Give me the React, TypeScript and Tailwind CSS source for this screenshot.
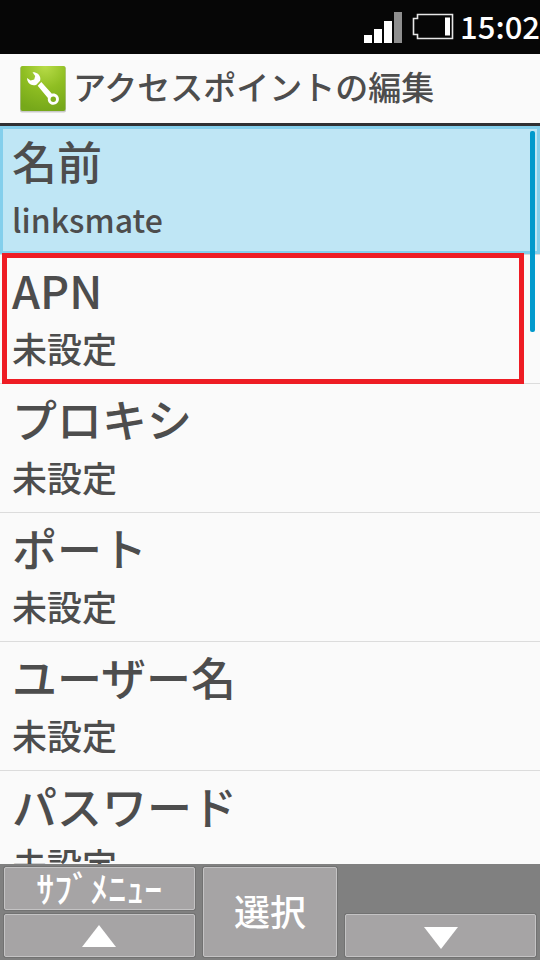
import React from 'react';
import clsx from 'clsx';

interface ApnField {
    label: string;
    value: string;
    selected?: boolean;
    highlighted?: boolean;
}

const fields: ApnField[] = [
    { label: '名前', value: 'linksmate', selected: true },
    { label: 'APN', value: '未設定', highlighted: true },
    { label: 'プロキシ', value: '未設定' },
    { label: 'ポート', value: '未設定' },
    { label: 'ユーザー名', value: '未設定' },
    { label: 'パスワード', value: '未設定' },
];

const SignalIcon = () => (
    <svg width="38" height="31" viewBox="0 0 38 31" aria-hidden="true">
        <path d="M0 23h8v8H0zM10 17h8v14h-8zM20 9h8v22h-8z" fill="#fff" />
        <path d="M30 0h8v31h-8z" fill="#8e8e8e" />
    </svg>
);

const BatteryIcon = () => (
    <svg width="42" height="28" viewBox="0 0 42 28" aria-hidden="true">
        <path d="M5.500 1.500h35v24h-35v-4h-4v-16h4z" fill="none" stroke="#e6e6e6" strokeWidth="1.600" />
        <path d="M33 4.500h5v18h-5z" fill="#fff" />
    </svg>
);

const SettingsIcon = () => (
    <svg width="48" height="48" viewBox="0 0 48 48" aria-hidden="true">
        <defs>
            <radialGradient id="tile" cx="0.55" cy="0" r="1">
                <stop offset="0" stopColor="#b8dc48" />
                <stop offset="0.5" stopColor="#8fbe22" />
                <stop offset="1" stopColor="#76a81a" />
            </radialGradient>
        </defs>
        <rect x="1" y="1.500" width="46" height="46" rx="2" fill="#c9c9c9" />
        <rect x="1.500" y="1" width="45" height="45" rx="2" fill="url(#tile)" />
        <path
            d="M13.500 7.300c4-.3 7.300 2.200 7.800 5.600.1 1 0 1.900-.2 2.800l-3.700 4c-4.200 1.700-8.600-.6-9.300-5.600l-.1-1 3.600 2.400 3.600-1 1-3.600z"
            fill="#fff"
        />
        <path
            d="M22.300 17l10.600 11.800c3.600-.9 7 1.700 7 5.300 0 3.100-2.500 5.600-5.600 5.600-3.500 0-6.100-3.200-5.400-6.800L18.700 20.800z"
            fill="#fff"
        />
        <circle cx="34.300" cy="34.200" r="2.700" fill="#7fb01d" />
    </svg>
);

const StatusBar = () => (
    <div className="flex h-[54px] shrink-0 items-center justify-end bg-[#060606] text-white">
        <SignalIcon />
        <span className="ml-2.5 mr-1.5">
            <BatteryIcon />
        </span>
        <time className="pb-1 text-[31px] font-medium leading-none">15:02</time>
    </div>
);

const FieldRow = ({ field }: { field: ApnField }) => (
    <li className="relative border-b border-[#dcdcdc]">
        <button
            type="button"
            className={clsx(
                'block w-full px-3 pb-[7px] pt-[5px] text-left',
                field.selected && 'bg-[#bfe6f5] shadow-[inset_0_0_0_3px_#84cfec]'
            )}
        >
            <span className="block text-[45px] leading-[60px]">{field.label}</span>
            <span className={clsx('block leading-[56px]', field.selected ? 'text-[32px]' : 'text-[35px]')}>
                {field.value}
            </span>
        </button>
        {field.highlighted && (
            <div className="pointer-events-none absolute -bottom-px -top-0.5 left-0.5 right-4 z-10 border-[5px] border-[#ee1c24]" />
        )}
    </li>
);

const keyClass =
    'flex items-center justify-center rounded-xs border border-[#c4c3c4] bg-[#a6a4a5] shadow-[0_0_0_1px_#727272]';

const SoftKeys = () => (
    <nav className="grid shrink-0 grid-cols-[192fr_136fr_192fr] grid-rows-[43px_43px] gap-x-2 gap-y-1 bg-[#808080] px-1 py-[3px] text-white">
        <button type="button" className={keyClass}>
            <span className="pb-1 text-[36px] leading-none">ｻﾌﾞﾒﾆｭｰ</span>
        </button>
        <button type="button" className={clsx(keyClass, 'row-span-2')}>
            <span className="pb-1 text-[36px] leading-none">選択</span>
        </button>
        <button type="button" aria-label="上へ" className={clsx(keyClass, 'col-start-1 row-start-2')}>
            <svg width="34" height="22" viewBox="0 0 34 22" aria-hidden="true">
                <path d="M17 0l17 22H0z" fill="#fff" />
            </svg>
        </button>
        <button type="button" aria-label="下へ" className={clsx(keyClass, 'col-start-3 row-start-2 pt-1')}>
            <svg width="34" height="22" viewBox="0 0 34 22" aria-hidden="true">
                <path d="M0 0h34L17 22z" fill="#fff" />
            </svg>
        </button>
    </nav>
);

export default function App() {
    return (
        <div className="flex h-screen flex-col overflow-hidden bg-[#fafafa] font-['Noto_Sans_CJK_JP',sans-serif] font-medium text-[#4d4d4d]">
            <StatusBar />
            <header className="flex h-[72px] shrink-0 items-center gap-1.5 border-b-[3px] border-[#303033] pl-[19px]">
                <SettingsIcon />
                <h1 className="pb-1 text-[33px] leading-none">アクセスポイントの編集</h1>
            </header>
            <main className="relative min-h-0 flex-1 overflow-hidden">
                <ul>
                    {fields.map((field) => (
                        <FieldRow key={field.label} field={field} />
                    ))}
                </ul>
                <div className="absolute right-[5px] top-[5px] z-20 h-[201px] w-[5px] rounded-xs bg-[#0099cc]" />
            </main>
            <SoftKeys />
        </div>
    );
}
